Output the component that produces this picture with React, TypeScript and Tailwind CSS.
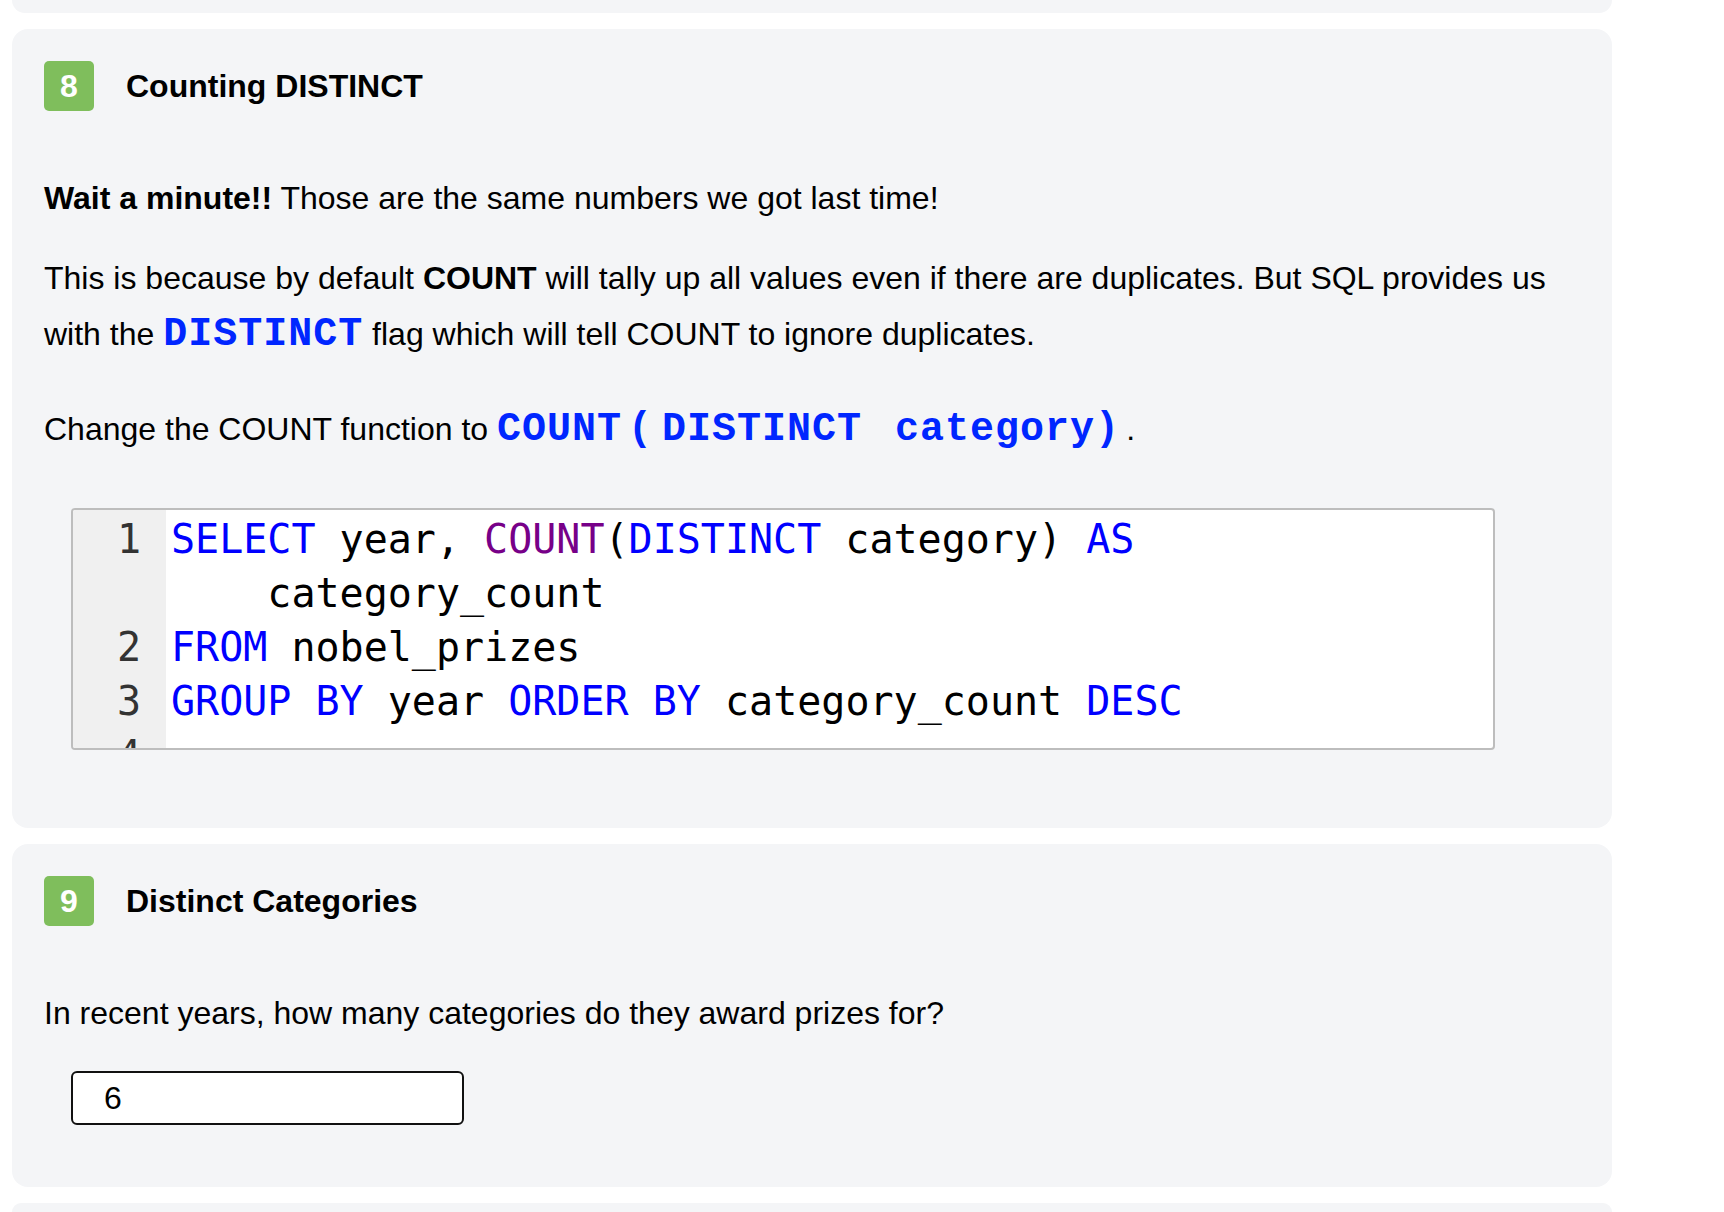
import React from "react";

const KW = "text-[#0000ff]";
const FN = "text-[#770088]";

function Badge({ n }: { n: number }) {
  return (
    <div className="w-[50px] h-[50px] rounded-[5px] bg-[#7fbe5c] flex items-center justify-center text-white font-bold text-[32px] leading-none">
      {n}
    </div>
  );
}

function Header({ n, title }: { n: number; title: string }) {
  return (
    <div className="flex items-center gap-[32px]">
      <Badge n={n} />
      <h2 className="text-[32px] font-bold leading-none">{title}</h2>
    </div>
  );
}

function Code({ children }: { children: React.ReactNode }) {
  return (
    <code className="font-['Liberation_Mono','Courier_New',monospace] font-bold text-[40px] leading-none tracking-[1px] text-[#0026ff]">
      {children}
    </code>
  );
}

export default function App() {
  const gutter = ["1", "", "2", "3", "4"];

  return (
    <div className="h-[1212px] overflow-hidden bg-white text-black font-['Liberation_Sans',Arial,sans-serif]">
      <div className="w-[1600px] ml-[12px] flex flex-col gap-[16px]">
        <div className="h-[13px] rounded-b-2xl bg-[#f4f5f7]" />

        {/* step 8 */}
        <section className="rounded-2xl bg-[#f4f5f7] px-[32px] pt-[32px] pb-[78px]">
          <Header n={8} title="Counting DISTINCT" />
          <p className="mt-[59px] text-[32px] leading-[56px]">
            <b>Wait a minute!!</b> Those are the same numbers we got last time!
          </p>
          <p className="mt-[24px] text-[32px] leading-[56px]">
            This is because by default <b>COUNT</b> will tally up all values even if there are duplicates. But SQL
            provides us with the <Code>DISTINCT</Code> flag which will tell COUNT to ignore duplicates.
          </p>
          <p className="mt-[39px] text-[32px] leading-[56px]">
            Change the COUNT function to{" "}
            <Code>
              COUNT<span className="ml-[6px]">(</span>
              <span className="ml-[9px]">DISTINCT</span> <span className="ml-[8px]">category)</span>
            </Code>
            <span className="ml-[6px]">.</span>
          </p>

          <div className="mt-[51px] ml-[27px] w-[1424px] h-[242px] overflow-hidden rounded-[4px] border-2 border-[#bdbdbd] bg-white flex font-['DejaVu_Sans_Mono',monospace] text-[40px] leading-[54px]">
            <div className="w-[93px] shrink-0 bg-[#f0f0f0] pt-[2px] pr-[25px] text-right text-[#333]">
              {gutter.map((g, i) => (
                <div key={i} className="h-[54px]">
                  {g}
                </div>
              ))}
            </div>
            <div className="flex-1 pt-[2px] pl-[5px] whitespace-pre">
              <div className="h-[54px]">
                <span className={KW}>SELECT</span> year, <span className={FN}>COUNT</span>(
                <span className={KW}>DISTINCT</span> category) <span className={KW}>AS</span>
              </div>
              <div className="h-[54px]">{"    category_count"}</div>
              <div className="h-[54px]">
                <span className={KW}>FROM</span> nobel_prizes
              </div>
              <div className="h-[54px]">
                <span className={KW}>GROUP</span> <span className={KW}>BY</span> year{" "}
                <span className={KW}>ORDER</span> <span className={KW}>BY</span> category_count{" "}
                <span className={KW}>DESC</span>
              </div>
              <div className="h-[54px]" />
            </div>
          </div>
        </section>

        {/* step 9 */}
        <section className="rounded-2xl bg-[#f4f5f7] px-[32px] pt-[32px] pb-[62px]">
          <Header n={9} title="Distinct Categories" />
          <p className="mt-[59px] text-[32px] leading-[56px]">
            In recent years, how many categories do they award prizes for?
          </p>
          <input
            readOnly
            value="6"
            className="mt-[30px] ml-[27px] block w-[393px] h-[54px] rounded-[6px] border-2 border-[#111] bg-white pl-[31px] text-[32px] outline-none"
          />
        </section>

        <div className="h-[9px] rounded-t-2xl bg-[#f4f5f7]" />
      </div>
    </div>
  );
}
